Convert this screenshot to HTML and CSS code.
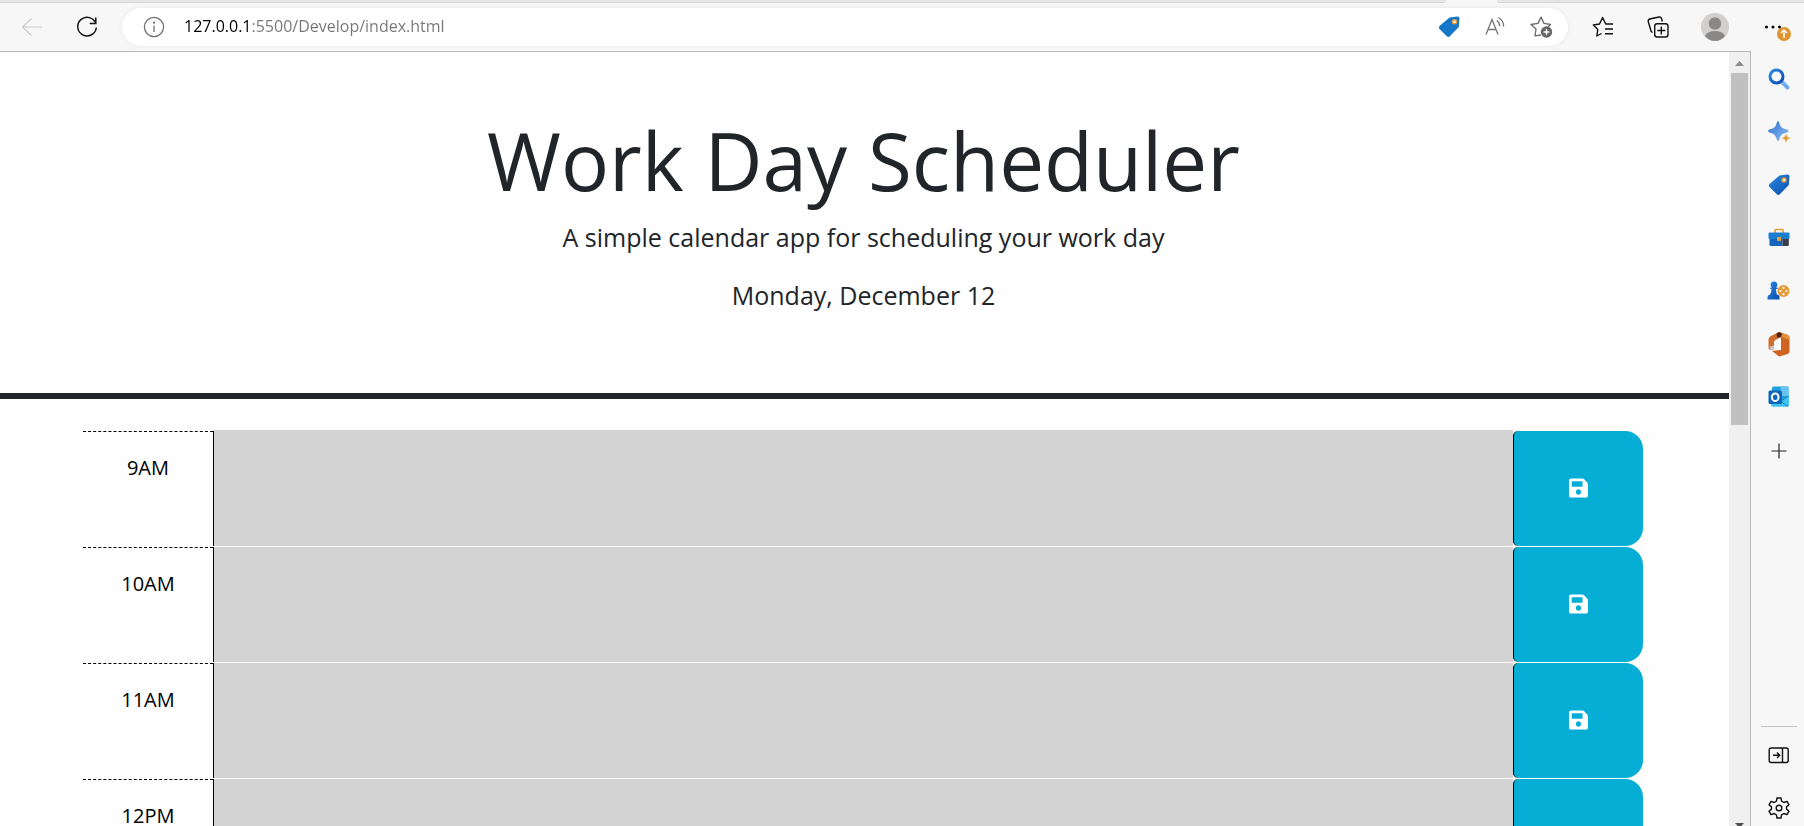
FILE: index.html
```html
<!DOCTYPE html>
<html lang="en">
<head>
<meta charset="utf-8">
<title>Work Day Scheduler</title>
<link rel="stylesheet" href="styles.css">
</head>
<body>
<svg class="defs" width="0" height="0" aria-hidden="true">
  <defs>
    <linearGradient id="blue" x1="0" y1="0" x2="1" y2="1"><stop offset="0" stop-color="#2a8ae0"/><stop offset="1" stop-color="#0a4cae"/></linearGradient>
    <linearGradient id="sky" x1="0" y1="0" x2="1" y2="1"><stop offset="0" stop-color="#2f6fd0"/><stop offset="1" stop-color="#8fc0f5"/></linearGradient>
    <symbol id="save" viewBox="0 0 448 512"><path fill="currentColor" d="M433.941 129.941l-83.882-83.882A48 48 0 0 0 316.118 32H48C21.49 32 0 53.490 0 80v352c0 26.510 21.490 48 48 48h352c26.510 0 48-21.490 48-48V163.882a48 48 0 0 0-14.059-33.941zM224 416c-35.346 0-64-28.654-64-64 0-35.346 28.654-64 64-64s64 28.654 64 64c0 35.346-28.654 64-64 64zm96-304.520V212c0 6.627-5.373 12-12 12H76c-6.627 0-12-5.373-12-12V108c0-6.627 5.373-12 12-12h228.520c3.183 0 6.235 1.264 8.485 3.515l3.480 3.480A11.996 11.996 0 0 1 320 111.480z"/></symbol>
  </defs>
</svg>
<div class="tabstrip"><span class="tab-side tab-left"></span><span class="tab-side tab-right"></span></div>
<header class="toolbar">
  <div class="nav">
    <button class="icon" aria-label="Back"><svg width="24" height="24" viewBox="0 0 24 24" fill="none" stroke="#cbcbcb" stroke-width="1.200"><path d="M22 12H2.500M11.500 3.500L2.500 12l9 8.500"/></svg></button>
    <button class="icon" aria-label="Refresh"><svg width="24" height="24" viewBox="0 0 24 24" fill="none" stroke="#111" stroke-width="1.500"><path d="M20.800 8.500A9.300 9.300 0 1 0 21.300 12.500M20.800 2.500v6h-6"/></svg></button>
  </div>
  <div class="address">
    <button class="icon" aria-label="Site information"><svg width="24" height="24" viewBox="0 0 24 24" fill="none" stroke="#707070" stroke-width="1.300"><circle cx="12" cy="12" r="9.600"/><path d="M12 10.500v6.500"/><circle cx="12" cy="7.700" r=".5" fill="#707070"/></svg></button>
    <input class="url" type="text" aria-label="Address" value="127.0.0.1:5500/Develop/index.html">
    <div class="address-tools">
      <button class="icon" aria-label="Shopping"><svg width="24" height="24" viewBox="0 0 24 24"><path fill="#1577c7" d="M12.500 2.500L20.500 1.500q2 0 2 2L21.800 12 12.800 21.300q-1.500 1.300-3 0L2.500 14q-1.300-1.500 0-3z"/><circle cx="17.500" cy="6.700" r="2" fill="#fff" stroke="#e69a36" stroke-width="1.500"/></svg></button>
      <button class="icon" aria-label="Read aloud"><svg width="24" height="24" viewBox="0 0 24 24" fill="none" stroke="#757575" stroke-width="1.300"><path d="M3 19.500L9 4.500l6 15M5.200 14.500h7.800M13.700 5.500q3 2 3 5.500M15.500 2.500q5.500 3.500 5 9"/></svg></button>
      <button class="icon" aria-label="Add to favorites"><svg width="24" height="24" viewBox="0 0 24 24" fill="none" stroke="#6b6b6b" stroke-width="1.300" stroke-linejoin="round"><path d="M12 20l-6 .8 1-6.800L2 9.500 9 8.400l3-6.300 3 6.300 6.500 1.100-2.500 2.500"/><circle cx="17.500" cy="17" r="5.700" fill="#666" stroke="none"/><path stroke="#fff" d="M17.500 14v6M14.500 17h6"/></svg></button>
    </div>
  </div>
  <div class="tools">
    <button class="icon" aria-label="Favorites"><svg width="24" height="24" viewBox="0 0 24 24" fill="none" stroke="#111" stroke-width="1.400" stroke-linejoin="round"><path d="M10.500 18.500L5.800 21l1-6.500L2.300 10l6.200-1L11.600 2.500 14.700 9H22M14 14h8M14 18.700h8"/></svg></button>
    <button class="icon" aria-label="Collections"><svg width="24" height="24" viewBox="0 0 24 24" fill="none" stroke="#111" stroke-width="1.400"><rect x="8.700" y="8.700" width="13.300" height="13.300" rx="2.500"/><path d="M15.300 11.500v8M11.300 15.500h8M6.500 17.500l-1.300-1L2.300 6.700q-.5-2 1.500-2.700l9.200-2q2-.3 2.500 1.500l.8 3"/></svg></button>
    <button class="icon" aria-label="Profile"><svg width="28" height="28" viewBox="0 0 28 28"><circle cx="14" cy="14" r="14" fill="#d1d0cf"/><circle cx="14" cy="10.500" r="6.200" fill="#8a8886"/><path fill="#8a8886" d="M4 23q2.500-5 10-5t10 5q-4 5-10 5T4 23z"/></svg></button>
    <button class="icon" aria-label="Settings and more"><svg width="34" height="28" viewBox="0 0 34 28"><g fill="#111"><circle cx="6.500" cy="14" r="1.600"/><circle cx="13" cy="14" r="1.600"/><circle cx="19.500" cy="14" r="1.600"/></g><circle cx="24" cy="21" r="7" fill="#e0942f"/><path d="M24 25v-7.500M21 20l3-3 3 3" fill="none" stroke="#fff" stroke-width="1.500"/></svg></button>
  </div>
</header>
<div class="window">
  <div class="viewport">
    <div class="page">
      <div class="jumbotron">
        <h1>Work Day Scheduler</h1>
        <p>A simple calendar app for scheduling your work day</p>
        <p>Monday, December 12</p>
      </div>
      <main class="planner">
        <div class="time-block"><label class="hour" for="h9">9AM</label><textarea class="description" id="h9"></textarea><button class="save" aria-label="Save 9AM"><svg width="19" height="22"><use href="#save"/></svg></button></div>
        <div class="time-block"><label class="hour" for="h10">10AM</label><textarea class="description" id="h10"></textarea><button class="save" aria-label="Save 10AM"><svg width="19" height="22"><use href="#save"/></svg></button></div>
        <div class="time-block"><label class="hour" for="h11">11AM</label><textarea class="description" id="h11"></textarea><button class="save" aria-label="Save 11AM"><svg width="19" height="22"><use href="#save"/></svg></button></div>
        <div class="time-block"><label class="hour" for="h12">12PM</label><textarea class="description" id="h12"></textarea><button class="save" aria-label="Save 12PM"><svg width="19" height="22"><use href="#save"/></svg></button></div>
      </main>
    </div>
    <div class="scrollbar" aria-hidden="true">
      <svg width="21" height="21" viewBox="0 0 21 21"><path fill="#8c8c8c" d="M6 14l4.500-5 4.500 5z"/></svg>
      <div class="track"><div class="thumb"></div></div>
      <svg width="21" height="8" viewBox="0 0 21 8"><path fill="#505050" d="M6 5h9l-4.500 5z"/></svg>
    </div>
  </div>
  <aside class="sidebar">
    <div class="apps">
      <button class="icon" aria-label="Search"><svg width="24" height="24" viewBox="0 0 24 24"><path d="M15 15l5.500 5.500" stroke="#72aeea" stroke-width="4" stroke-linecap="round"/><circle cx="9.500" cy="9.500" r="6.500" fill="#f7faff" stroke="url(#blue)" stroke-width="3"/></svg></button>
      <button class="icon" aria-label="Discover"><svg width="24" height="24" viewBox="0 0 24 24"><path fill="url(#sky)" d="M11 1q1 0 1.500 2.500 1 4.500 5.500 5.500 3.500.7 3.500 2t-3.500 2q-4.500 1-5.500 5.500-.5 2.500-1.500 2.500t-1.500-2.500Q8.500 14 4 13q-3-.7-3-2t3-2q4.500-1 5.500-5.500Q10 1 11 1z"/><path fill="#e39a35" d="M19 13.500l1.500 3.300 3.500 1.400-3.500 1.400L19 23l-1.500-3.400-3.500-1.400 3.500-1.400z" stroke="#f7f7f7" stroke-width=".5"/></svg></button>
      <button class="icon" aria-label="Shopping"><svg width="24" height="24" viewBox="0 0 24 24"><path fill="url(#blue)" d="M12.500 2.500L20.500 1.500q2 0 2 2L21.800 12 12.800 21.300q-1.500 1.300-3 0L2.500 14q-1.300-1.500 0-3z"/><circle cx="17" cy="7" r="2" fill="#fff" stroke="#e69a36" stroke-width="1.500"/></svg></button>
      <button class="icon" aria-label="Tools"><svg width="24" height="24" viewBox="0 0 24 24"><path d="M8 7V4.500q0-1 1-1h6q1 0 1 1V7" fill="none" stroke="#e0a040" stroke-width="1.700"/><rect x="1.500" y="6.500" width="21" height="6.500" rx="1" fill="#1c7ed0"/><path d="M2.500 13h13v7h-12q-1 0-1-1z" fill="#1565bd"/><path d="M15.500 13h6.300v6q0 1-1 1h-5.300z" fill="#3b3e48"/><rect x="10" y="11" width="4" height="4" rx="1" fill="#eba037"/></svg></button>
      <button class="icon" aria-label="Games"><svg width="24" height="24" viewBox="0 0 24 24"><circle cx="16.500" cy="12" r="6" fill="#e59a38"/><g fill="#fff"><circle cx="16.500" cy="8.800" r="1.100"/><circle cx="19.500" cy="12" r="1.100"/><circle cx="16.500" cy="15.200" r="1.100"/><circle cx="13.500" cy="12" r="1.100"/></g><path fill="url(#blue)" d="M7 2.500a3.300 3.300 0 0 1 2 6h1.500v1.500h-1.500q0 4 1 5.500 2.500.5 2.500 2v3H.5v-2.500q0-2 2.500-2.500 1.500-1.500 1.500-5.500H3.300V8.500H5a3.300 3.300 0 0 1 2-6z"/></svg></button>
      <button class="icon" aria-label="Office"><svg width="24" height="26" viewBox="0 0 24 26"><path fill="#fff" d="M7 7h8v12H6z"/><path fill="#cf6420" d="M12 1l7.500 2.500q3 1 3 3v14q0 2-2.500 2.800l-8 2.200-7-5.500 9-1V7z"/><path fill="#e0913a" d="M12 1l7.500 2.500q3 1 3 3V9L14.500 6z"/><path fill="#cf6e2c" d="M12 1l2.500 5-6 3q-1.500.7-1.500 2.500v5L2.500 19q-1-1-1-3V8.500q0-2 2-3.200z"/><path fill="#4b2416" d="M9.500 2.500L12 1l3 1.500-1 3.500-4 .5z"/><path fill="#c9c4bf" d="M2.500 15.500l4.500-1 .5 4L5 19.500q-2-.5-2.500-4z"/></svg></button>
      <button class="icon" aria-label="Outlook"><svg width="24" height="24" viewBox="0 0 24 24"><rect x="5" y="1.500" width="16.500" height="18" rx="1.500" fill="#1fa0dd"/><path fill="#67c3f0" d="M13.500 1.500h7q1 0 1 1V11h-8z"/><path fill="#3fc5ef" d="M4 11l9 5 9-5.500V20q0 1.800-1.500 1.800h-15Q4 21.800 4 20z"/><path d="M13 16l8 5.500M14 16l7.500-5" stroke="#137dc0"/><rect x="1.500" y="5.500" width="13.500" height="13.500" rx="1.500" fill="#0f66b8"/><ellipse cx="8.200" cy="12.200" rx="3.300" ry="3.800" fill="none" stroke="#fff" stroke-width="2"/></svg></button>
      <button class="icon add" aria-label="Add app"><svg width="24" height="24" viewBox="0 0 24 24" stroke="#222" stroke-width="1.200"><path d="M12 4.500v15M4.500 12h15"/></svg></button>
    </div>
    <div class="controls">
      <button class="icon" aria-label="Hide sidebar"><svg width="24" height="24" viewBox="0 0 24 24" fill="none" stroke="#111" stroke-width="1.400"><rect x="2.200" y="5" width="19" height="14.500" rx="2"/><path d="M15.500 5v14.500M6 12.200h6.500M10 9.500l2.700 2.700-2.700 2.700"/></svg></button>
      <button class="icon" aria-label="Settings"><svg width="24" height="24" viewBox="0 0 24 24" fill="none" stroke="#111" stroke-width="1.400" stroke-linejoin="round"><circle cx="12" cy="12" r="2.800"/><path d="M10 2h4l.6 3.200 2.300 1.300 3.100-1.100 2 3.400-2.500 2.100v2.200l2.500 2.100-2 3.400-3.100-1.100-2.300 1.300L14 22h-4l-.6-3.200-2.300-1.300L4 18.600l-2-3.400 2.500-2.100v-2.200L2 8.800l2-3.400 3.100 1.100 2.300-1.300z"/></svg></button>
    </div>
  </aside>
</div>
</body>
</html>
```
FILE: styles.css
```css
* { box-sizing: border-box; }
body {
  margin: 0;
  height: 100vh;
  overflow: hidden;
  display: flex;
  flex-direction: column;
  background: #f7f7f7;
  color: #212529;
  font-family: "Open Sans", sans-serif;
}
.defs { position: absolute; }
button { border: 0; padding: 0; font: inherit; cursor: pointer; }
.icon { display: flex; align-items: center; justify-content: center; background: none; flex: none; }
.icon svg { display: block; }

.tabstrip { display: flex; justify-content: space-between; height: 3px; gap: 51px; }
.tab-side { background: #e6e6e6; border-bottom: 1px solid #d4d4d4; }
.tab-left { flex: 1; border-bottom-right-radius: 3px; }
.tab-right { width: 307px; border-bottom-left-radius: 3px; }

.toolbar { display: flex; align-items: center; height: 48px; flex: none; }
.nav { display: flex; gap: 31px; padding: 0 23px 0 20px; }
.address {
  flex: 1;
  display: flex;
  align-items: center;
  height: 38px;
  padding: 0 15px 0 20px;
  border-radius: 19px;
  background: #fff;
  box-shadow: 0 0 4px rgba(0, 0, 0, .08);
}
.url {
  flex: 1;
  min-width: 0;
  height: 30px;
  margin-left: 18px;
  padding: 0 0 2px;
  border: 0;
  outline: 0;
  font: 16px "Open Sans", sans-serif;
  color: transparent;
  background: linear-gradient(90deg, #000 68px, #767676 68px);
  -webkit-background-clip: text;
  background-clip: text;
}
.address-tools { display: flex; gap: 22px; }
.tools { display: flex; align-items: center; gap: 31px; padding: 0 10px 0 23px; }

.window { flex: 1; min-height: 0; display: flex; }
.viewport {
  flex: 1;
  display: flex;
  overflow: hidden;
  background: #fefefe;
  border-top: 1px solid #b9b9b9;
  border-right: 1px solid #b9b9b9;
}
.page { flex: 1; }
.jumbotron { padding: 60px 22px 59px 20px; text-align: center; border-bottom: 6px solid #212529; }
.jumbotron h1 { margin: 0 0 10px; font-size: 80px; font-weight: 400; line-height: 96px; }
.jumbotron p { margin: 0 0 20px; font-size: 25px; line-height: 38px; }
.planner { padding: 31px 5% 0 4.8%; }
.time-block { display: grid; grid-template-columns: 1fr 10fr 1fr; height: 116px; }
.hour {
  margin-top: 1px;
  padding-top: 21px;
  border-top: 1px dashed #000;
  color: #000;
  text-align: center;
  font-size: 20px;
  line-height: 29px;
}
.description {
  margin: 0;
  padding: 10px;
  border: 0;
  border-top: 1px solid #fff;
  border-radius: 0;
  outline: 0;
  resize: none;
  background: #d3d3d3;
  box-shadow: inset 1px 0 #000;
  font: 20px "Open Sans", sans-serif;
}
.time-block:first-child .description { border-top-color: #d3d3d3; }
.save {
  display: flex;
  align-items: center;
  justify-content: center;
  margin-top: 1px;
  padding-bottom: 2px;
  border-left: 1px solid #000;
  border-radius: 5px 18px 18px 5px;
  background: #06aed5;
  color: #fff;
}

.scrollbar { width: 21px; display: flex; flex-direction: column; background: #f0f0f0; }
.track { flex: 1; padding: 0 2px; }
.thumb { height: 47.3%; background: #c0c0c0; }

.sidebar {
  width: 53px;
  display: flex;
  flex-direction: column;
  justify-content: space-between;
  align-items: center;
  padding: 12px 0 2px 2px;
}
.apps, .controls { display: flex; flex-direction: column; align-items: center; gap: 21px; }
.apps .icon, .controls .icon { width: 32px; height: 32px; }
.add { margin-top: 1px; }
.controls { padding: 12px 2px 0; border-top: 1px solid #c4c4c4; }
```
